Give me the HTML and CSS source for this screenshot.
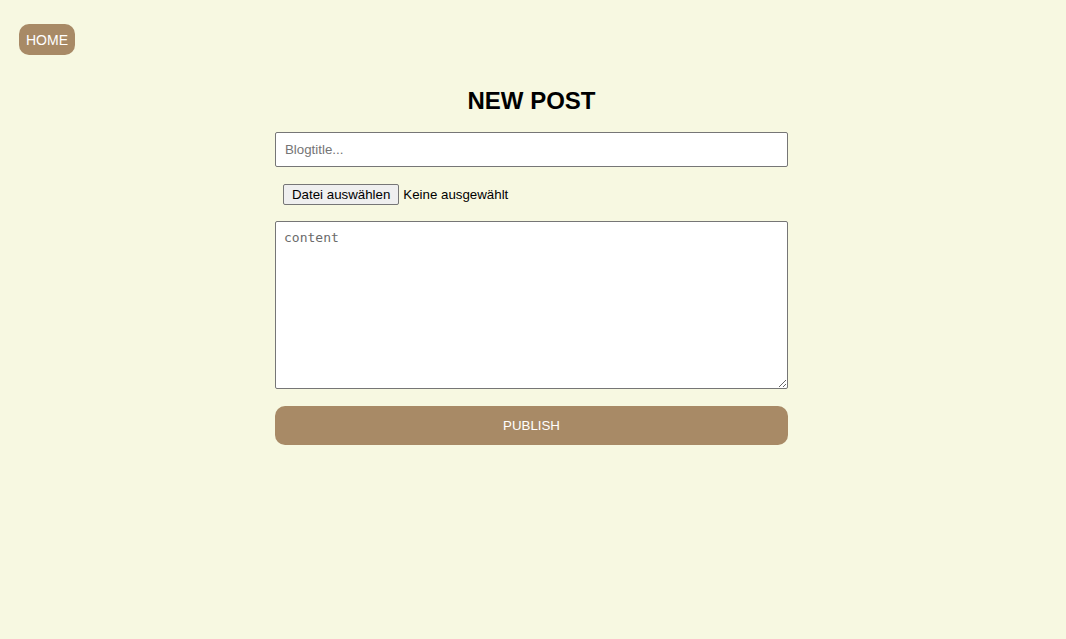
FILE: index.html
```html
<!DOCTYPE html>
<html lang="de">
<head>
<meta charset="utf-8">
<title>New Post</title>
<link rel="stylesheet" href="styles.css">
</head>
<body>
<nav class="nav">
  <a class="home-btn" href="#">HOME</a>
</nav>
<main class="main">
  <form class="post-form">
    <h1 class="title">NEW POST</h1>
    <input class="title-input" type="text" placeholder="Blogtitle...">
    <div class="file-row">
      <label class="file-btn" for="file">Datei auswählen</label>
      <span class="file-name">Keine ausgewählt</span>
      <input id="file" class="file-hidden" type="file">
    </div>
    <textarea class="content" placeholder="content"></textarea>
    <button class="publish" type="button">PUBLISH</button>
  </form>
</main>
</body>
</html>
```
FILE: styles.css
```css
html, body {
  margin: 0;
  padding: 0;
  background: #f7f8e1;
  font-family: "Liberation Sans", Arial, sans-serif;
}
.nav {
  padding: 24px 19px 0;
  display: flex;
}
.home-btn {
  display: flex;
  align-items: center;
  height: 31px;
  padding: 0 7px;
  background: #a88a66;
  color: #fff;
  border-radius: 10px;
  font-size: 14px;
  text-decoration: none;
}
.main {
  display: flex;
  justify-content: center;
  padding-right: 3px;
}
.post-form {
  width: 513px;
  display: flex;
  flex-direction: column;
}
.title {
  margin: 31px 0 0;
  font-size: 24px;
  line-height: 30px;
  font-weight: bold;
  text-align: center;
  color: #000;
}
.title-input {
  margin-top: 16px;
  height: 35px;
  box-sizing: border-box;
  border: 1px solid #767676;
  border-radius: 2px;
  padding: 0 9px;
  font-family: "Liberation Sans", Arial, sans-serif;
  font-size: 13.3px;
  background: #fff;
}
.title-input::placeholder {
  color: #757575;
}
.file-row {
  margin-top: 17px;
  padding-left: 8px;
  display: flex;
  align-items: center;
  gap: 4px;
  font-size: 13.3px;
  height: 21px;
}
.file-btn {
  box-sizing: border-box;
  height: 21px;
  display: flex;
  align-items: center;
  padding: 0 8px;
  background: #efefef;
  border: 1px solid #767676;
  border-radius: 2px;
  color: #000;
}
.file-name {
  color: #000;
}
.file-hidden {
  display: none;
}
.content {
  margin-top: 16px;
  height: 168px;
  box-sizing: border-box;
  border: 1px solid #767676;
  border-radius: 2px;
  padding: 8px;
  font-family: "DejaVu Sans Mono", monospace;
  font-size: 13px;
  background: #fff;
}
.content::placeholder {
  color: #6b6b6b;
}
.publish {
  margin-top: 17px;
  height: 39px;
  border: none;
  border-radius: 10px;
  background: #a88a66;
  color: #fff;
  font-family: "Liberation Sans", Arial, sans-serif;
  font-size: 13.3px;
}
```
